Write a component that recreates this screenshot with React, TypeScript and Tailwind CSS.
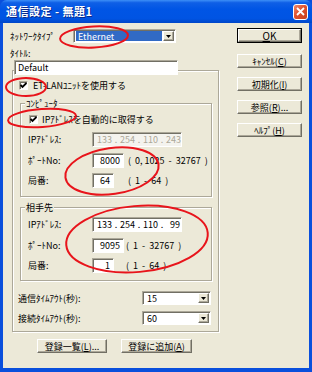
import React from "react";

const sunken =
  "border border-[#ACA899] border-b-white border-r-white shadow-[inset_1px_1px_0_#716F64]";
const raised =
  "border border-white border-b-[#716F64] border-r-[#716F64] shadow-[inset_-1px_-1px_0_#ACA899]";

function Check() {
  return (
    <div className={`w-[9px] h-[9px] bg-white ${sunken} flex items-center justify-center shrink-0`}>
      <svg width="7" height="7" viewBox="0 0 7 7">
        <path d="M0.5 3 L2.5 5 L6.5 1" stroke="#000" strokeWidth="1.8" fill="none" />
      </svg>
    </div>
  );
}

function DropBtn() {
  return (
    <div className={`w-[11px] h-full bg-[#ECE9D8] ${raised} flex items-center justify-center shrink-0`}>
      <svg width="5" height="3" viewBox="0 0 5 3">
        <path d="M0 0 L5 0 L2.5 3 Z" fill="#000" />
      </svg>
    </div>
  );
}

function Combo({ w, value, selected }: { w: string; value: string; selected?: boolean }) {
  return (
    <div className={`${w} h-full bg-white ${sunken} flex items-stretch p-[1px]`}>
      <div className="flex-1 flex items-center pl-[1px] pr-[1px]">
        <div
          className={
            selected
              ? "w-full h-full bg-[#316AC5] text-white flex items-center pl-[2px]"
              : "w-full h-full text-black flex items-center pl-[2px]"
          }
        >
          {value}
        </div>
      </div>
      <DropBtn />
    </div>
  );
}

function Field({ w, value }: { w: string; value: string }) {
  return (
    <div className={`${w} h-full bg-white ${sunken} flex items-center justify-end pr-[3px]`}>
      {value}
    </div>
  );
}

function IpField({ parts, disabled }: { parts: string[]; disabled?: boolean }) {
  return (
    <div
      className={
        disabled
          ? `w-[90px] h-full bg-[#F4F3EE] text-[#ACA899] ${sunken} flex items-center pl-[4px] pr-[1px] whitespace-nowrap`
          : `w-[90px] h-full bg-white text-black ${sunken} flex items-center pl-[4px] pr-[1px] whitespace-nowrap`
      }
    >
      {parts.map((p, i) => (
        <React.Fragment key={i}>
          <span className={i === 3 ? "flex-1 text-right" : "shrink-0"}>{p}</span>
          {i < 3 && <span className="w-[8px] shrink-0 text-center">.</span>}
        </React.Fragment>
      ))}
    </div>
  );
}

function Btn({ label, w, def }: { label: React.ReactNode; w: string; def?: boolean }) {
  if (def) {
    return (
      <div className={`${w} h-[15px] border border-black shrink-0`}>
        <div className={`w-full h-full bg-[#ECE9D8] ${raised} flex items-center justify-center`}>
          {label}
        </div>
      </div>
    );
  }
  return (
    <div className={`${w} h-[14px] bg-[#ECE9D8] ${raised} flex items-center justify-center shrink-0`}>
      {label}
    </div>
  );
}

function Group({ caption, h, children }: { caption: string; h: string; children: React.ReactNode }) {
  return (
    <div className={`mt-[10px] ml-[7px] w-[192px] ${h} border border-[#ACA899] shadow-[inset_1px_1px_0_#fff,1px_1px_0_#fff]`}>
      <div className="-mt-[6px] ml-[4px] px-[1px] h-[11px] w-fit bg-[#ECE9D8] flex items-center">
        {caption}
      </div>
      {children}
    </div>
  );
}

function Row({ label, mt, children }: { label: string; mt: string; children: React.ReactNode }) {
  return (
    <div className={`${mt} ml-[7px] h-[15px] flex items-center`}>
      <div className="w-[64px]">{label}</div>
      {children}
    </div>
  );
}

export default function App() {
  return (
    <div className="relative w-[312px] h-[372px] flex flex-col bg-[#0A4FDC] overflow-hidden font-['Noto_Sans_CJK_JP','Noto_Sans',sans-serif] text-[9px] leading-none text-black">
      {/* title bar */}
      <div className="h-[23px] shrink-0 flex items-center pl-[6px] pr-[4px] rounded-t-[7px] bg-[linear-gradient(to_bottom,#3D8FF7_0%,#0F5FE6_12%,#0055E5_40%,#0054E3_80%,#0046C8_100%)]">
        <span className="text-white font-bold text-[11px] tracking-[0.5px] [text-shadow:1px_1px_0_#0A2A8A]">
          通信設定 - 無題1
        </span>
        <div className="ml-auto w-[15px] h-[16px] rounded-[3px] border border-white bg-[linear-gradient(135deg,#F08A6C_0%,#E0522E_45%,#C8401E_100%)] flex items-center justify-center">
          <svg width="9" height="9" viewBox="0 0 9 9">
            <path d="M1 1 L8 8 M8 1 L1 8" stroke="#fff" strokeWidth="1.8" />
          </svg>
        </div>
      </div>

      {/* body */}
      <div className="flex-1 ml-[3px] mr-[3px] mb-[4px] bg-[#ECE9D8] flex">
        {/* left column */}
        <div className="w-[234px] pl-[7px] pt-[6px] flex flex-col">
          <div className="h-[14px] flex items-center">
            <div className="w-[63px]">ﾈｯﾄﾜｰｸﾀｲﾌﾟ</div>
            <Combo w="w-[103px]" value="Ethernet" selected />
          </div>
          <div className="mt-[5px] h-[11px] flex items-center">ﾀｲﾄﾙ:</div>
          <div className={`relative z-10 mt-[1px] ml-[4px] w-[164px] h-[15px] bg-white ${sunken} flex items-center pl-[3px]`}>
            Default
          </div>
          <div className="-mt-[5px] ml-[2px] w-[207px] h-[262px] border border-[#ACA899] shadow-[inset_1px_1px_0_#fff,1px_1px_0_#fff] flex flex-col">
            <div className="mt-[10px] ml-[6px] h-[9px] flex items-center gap-[5px]">
              <Check />
              <span>ET-LANﾕﾆｯﾄを使用する</span>
            </div>
            <div className="mt-[3px]">
              <Group caption="ｺﾝﾋﾟｭｰﾀ" h="h-[94px]">
                <div className="mt-[6px] ml-[8px] h-[9px] flex items-center gap-[4px]">
                  <Check />
                  <span>IPｱﾄﾞﾚｽを自動的に取得する</span>
                </div>
                <Row label="IPｱﾄﾞﾚｽ:" mt="mt-[8px]">
                  <IpField parts={["133", "254", "110", "243"]} disabled />
                </Row>
                <Row label="ﾎﾟｰﾄNo:" mt="mt-[6px]">
                  <Field w="w-[32px]" value="8000" />
                  <span className="ml-[4px] whitespace-pre">(  0, 1025  -  32767  )</span>
                </Row>
                <Row label="局番:" mt="mt-[5px]">
                  <Field w="w-[22px]" value="64" />
                  <span className="ml-[14px] whitespace-pre">(  1  -  64  )</span>
                </Row>
              </Group>
            </div>
            <Group caption="相手先" h="h-[74px]">
              <Row label="IPｱﾄﾞﾚｽ:" mt="mt-[4px]">
                <IpField parts={["133", "254", "110", "99"]} />
              </Row>
              <Row label="ﾎﾟｰﾄNo:" mt="mt-[6px]">
                <Field w="w-[32px]" value="9095" />
                <span className="ml-[2px] whitespace-pre">(  1  -  32767  )</span>
              </Row>
              <Row label="局番:" mt="mt-[5px]">
                <Field w="w-[22px]" value="1" />
                <span className="ml-[12px] whitespace-pre">(  1  -  64  )</span>
              </Row>
            </Group>
            <div className="mt-[10px] ml-[5px] h-[14px] flex items-center">
              <div className="w-[124px]">通信ﾀｲﾑｱｳﾄ(秒):</div>
              <Combo w="w-[69px]" value="15" />
            </div>
            <div className="mt-[6px] ml-[5px] h-[14px] flex items-center">
              <div className="w-[124px]">接続ﾀｲﾑｱｳﾄ(秒):</div>
              <Combo w="w-[69px]" value="60" />
            </div>
          </div>
          <div className="mt-[7px] ml-[27px] flex gap-[14px]">
            <Btn w="w-[70px]" label={<span>登録一覧(<u>L</u>)...</span>} />
            <Btn w="w-[71px]" label={<span>登録に追加(<u>A</u>)</span>} />
          </div>
        </div>

        {/* right column */}
        <div className="pt-[5px] flex flex-col">
          <Btn w="w-[65px]" def label={<span className="text-[10px]"><u>O</u>K</span>} />
          <div className="mt-[11px] flex flex-col gap-[9px]">
            <Btn w="w-[65px]" label={<span>ｷｬﾝｾﾙ(<u>C</u>)</span>} />
            <Btn w="w-[65px]" label={<span>初期化(<u>I</u>)</span>} />
            <Btn w="w-[65px]" label={<span>参照(<u>R</u>)...</span>} />
            <Btn w="w-[65px]" label={<span>ﾍﾙﾌﾟ(<u>H</u>)</span>} />
          </div>
        </div>
      </div>

      {/* red annotation ellipses */}
      <svg className="absolute left-0 top-0 pointer-events-none" width="312" height="372">
        <g fill="none" stroke="#E8141B" strokeWidth="2">
          <ellipse cx="94" cy="37" rx="34" ry="10.5" transform="rotate(-3 94 37)" />
          <ellipse cx="26" cy="87" rx="20" ry="9" />
          <ellipse cx="42" cy="118" rx="34" ry="9" transform="rotate(-4 42 118)" />
          <ellipse cx="112" cy="171" rx="47" ry="23" transform="rotate(-8 112 171)" />
          <ellipse cx="137" cy="239" rx="71" ry="33" transform="rotate(-5 137 239)" />
        </g>
      </svg>
    </div>
  );
}
